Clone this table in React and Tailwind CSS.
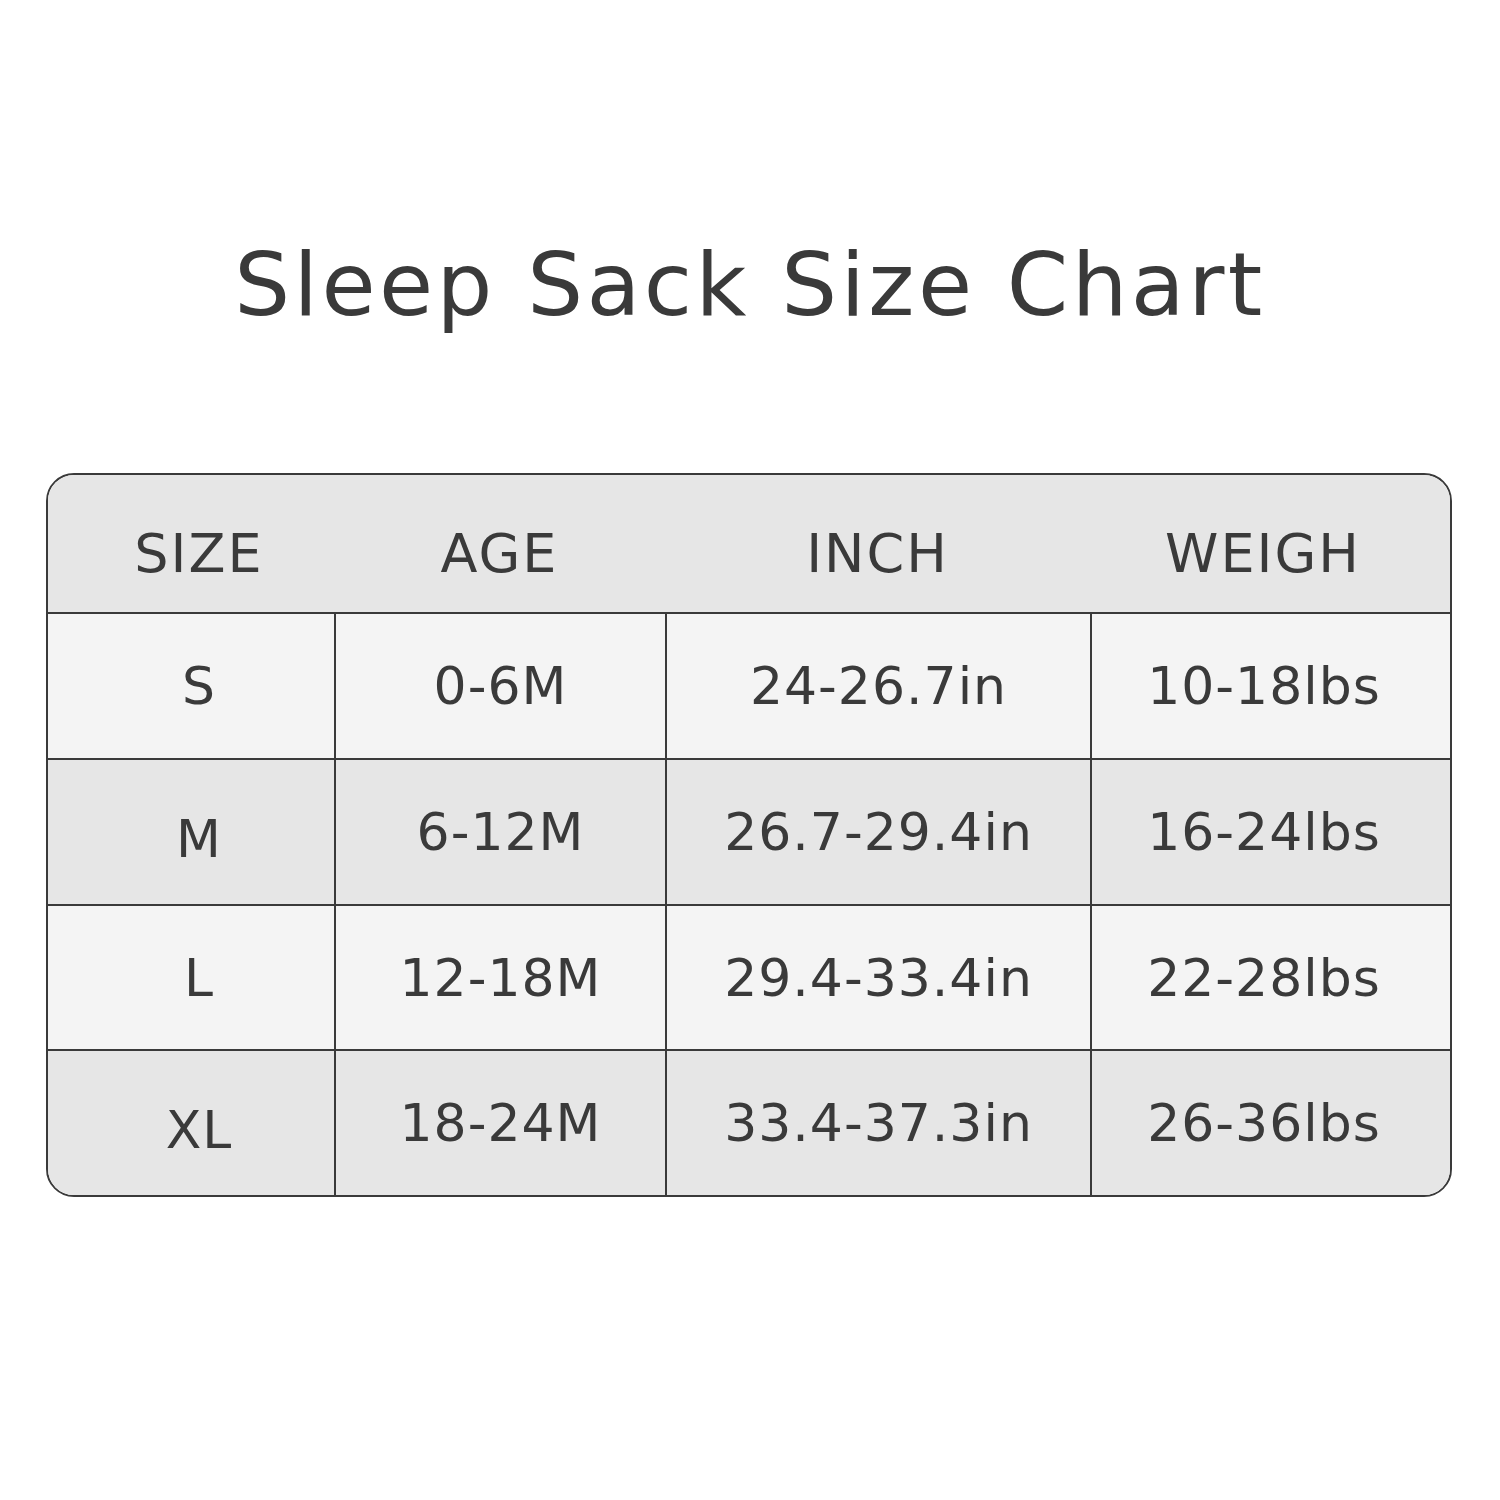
import React from "react";

const rows = [
  ["S", "0-6M", "24-26.7in", "10-18lbs", "bg-[#f4f4f4]", "h-[146px]", ""],
  ["M", "6-12M", "26.7-29.4in", "16-24lbs", "bg-[#e6e6e6]", "h-[146px]", "pt-[14px]"],
  ["L", "12-18M", "29.4-33.4in", "22-28lbs", "bg-[#f4f4f4]", "h-[145px]", ""],
  ["XL", "18-24M", "33.4-37.3in", "26-36lbs", "bg-[#e6e6e6]", "h-[144px]", "pt-[14px]"],
];

export default function App() {
  return (
    <div
      className="w-[1500px] h-[1500px] bg-white text-[#3a3a3a] flex flex-col"
      style={{ fontFamily: '"DejaVu Sans", sans-serif' }}
    >
      <div className="h-[473px] flex flex-col items-center pt-[241px]">
        <h1 className="text-[88px] leading-none font-normal tracking-[3.4px]">Sleep Sack Size Chart</h1>
      </div>
      <div className="ml-[46px] w-[1406px] border-2 border-[#3a3a3a] rounded-[28px] overflow-hidden">
        <div className="grid grid-cols-[286px_331px_425px_1fr] h-[139px] bg-[#e6e6e6] border-b-2 border-[#3a3a3a] items-center pt-[20px] text-[54px] tracking-[2px]">
          <div className="text-center pl-[16px]">SIZE</div>
          <div className="text-center">AGE</div>
          <div className="text-center">INCH</div>
          <div className="text-center pr-[14px]">WEIGH</div>
        </div>
        {rows.map((r, i) => (
          <div
            key={r[0]}
            className={`grid grid-cols-[286px_331px_425px_1fr] ${r[5]} ${r[4]} ${i < 3 ? "border-b-2 border-[#3a3a3a]" : ""} text-[52px] tracking-[1px]`}
          >
            <div className={`flex items-center justify-center pl-[16px] ${r[6]}`}>{r[0]}</div>
            <div className="flex items-center justify-center border-l-2 border-[#3a3a3a]">{r[1]}</div>
            <div className="flex items-center justify-center border-l-2 border-[#3a3a3a]">{r[2]}</div>
            <div className="flex items-center justify-center border-l-2 border-[#3a3a3a] pr-[14px]">{r[3]}</div>
          </div>
        ))}
      </div>
    </div>
  );
}
